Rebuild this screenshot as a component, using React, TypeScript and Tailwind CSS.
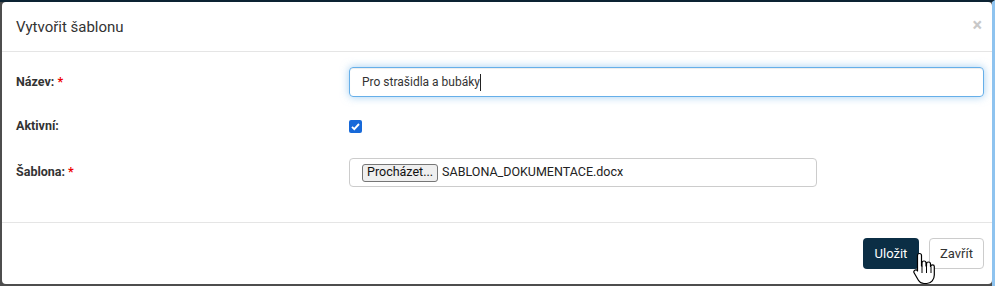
import React from "react";

function HandCursor() {
  return (
    <svg
      className="absolute left-[913px] top-[250px]"
      width="22"
      height="34"
      viewBox="0 0 22 34"
    >
      <path
        d="M6.5 1.5c1.1 0 2 .9 2 2V14h.5v-3c0-1.1.9-2 2-2s2 .9 2 2v3h.5v-2c0-1.1.9-2 2-2s2 .9 2 2v2.5h.3c0-1 .8-1.7 1.7-1.7s1.8.8 1.8 1.8V23c0 4.5-3 8.5-7.5 8.5H11c-2.6 0-4.4-1.3-5.6-3.3L1.2 21c-.6-1-.3-2.2.6-2.8.9-.6 2.1-.3 2.7.6l0 0L4.5 19V3.5c0-1.1.9-2 2-2z"
        fill="#fff"
        stroke="#000"
        strokeWidth="1.2"
        strokeLinejoin="round"
      />
      <path d="M9 14v7M13.5 14v7M18 15v6" stroke="#000" strokeWidth="1" />
    </svg>
  );
}

export default function App() {
  return (
    <div
      className="relative w-[995px] h-[286px] bg-[#4d4d4d] border-t-2 border-t-[#0c2333] border-r-[3px] border-r-[#8ec3ef] overflow-hidden"
      style={{ fontFamily: 'Roboto, "Liberation Sans", Arial, sans-serif' }}
    >
      <div className="ml-[2px] w-[990px] h-[282px] bg-white rounded-[4px] flex flex-col">
        {/* header */}
        <div className="h-[50px] flex items-center justify-between pl-[14px] pr-[10px] border-b border-[#e5e5e5]">
          <h4 className="text-[15px] text-[#333] pt-[1px]">Vytvořit šablonu</h4>
          <span className="text-[18px] text-[#c8c8c8] font-bold leading-none -mt-[4px]">
            ×
          </span>
        </div>

        {/* body */}
        <div className="h-[170px] pl-[14px] pr-[8px] pt-[15px] text-[12.5px] text-[#333]">
          <div className="flex items-center h-[30px]">
            <label className="w-[333px] font-bold">
              Název: <span className="text-[#e00]">*</span>
            </label>
            <div className="flex-1 h-[30px] flex items-center border border-[#66afe9] rounded-[4px] px-[12px] shadow-[inset_0_1px_1px_rgba(0,0,0,0.075),0_0_8px_rgba(102,175,233,0.6)]">
              <span className="text-[12px]">Pro strašidla a bubáky</span>
              <span className="w-px h-[17px] bg-[#222]" />
            </div>
          </div>

          <div className="flex items-center h-[30px] mt-[14px]">
            <label className="w-[333px] font-bold">Aktivní:</label>
            <span className="w-[13px] h-[13px] rounded-[2px] bg-[#1769d9] flex items-center justify-center">
              <svg width="11" height="11" viewBox="0 0 11 11">
                <path
                  d="M2 5.8l2.3 2.3L9 3"
                  fill="none"
                  stroke="#fff"
                  strokeWidth="1.9"
                />
              </svg>
            </span>
          </div>

          <div className="flex items-center h-[29px] mt-[17px]">
            <label className="w-[333px] font-bold">
              Šablona: <span className="text-[#e00]">*</span>
            </label>
            <div className="w-[468px] h-[29px] flex items-center border border-[#ccc] rounded-[4px] px-[12px] gap-[4px] text-[12.5px]">
              <span className="h-[18px] px-[4px] flex items-center bg-[#efefef] border border-[#767676] rounded-[3px] text-[#111]">
                Procházet...
              </span>
              <span className="text-[#222]">SABLONA_DOKUMENTACE.docx</span>
            </div>
          </div>
        </div>

        {/* footer */}
        <div className="flex-1 border-t border-[#e5e5e5] flex items-start justify-end gap-[10px] pt-[15px] pr-[8px] text-[13px]">
          <button className="w-[56px] h-[31px] rounded-[4px] bg-[#0b2e45] text-white">
            Uložit
          </button>
          <button className="w-[55px] h-[31px] rounded-[4px] border border-[#ccc] bg-white text-[#333]">
            Zavřít
          </button>
        </div>
      </div>
      <HandCursor />
    </div>
  );
}
